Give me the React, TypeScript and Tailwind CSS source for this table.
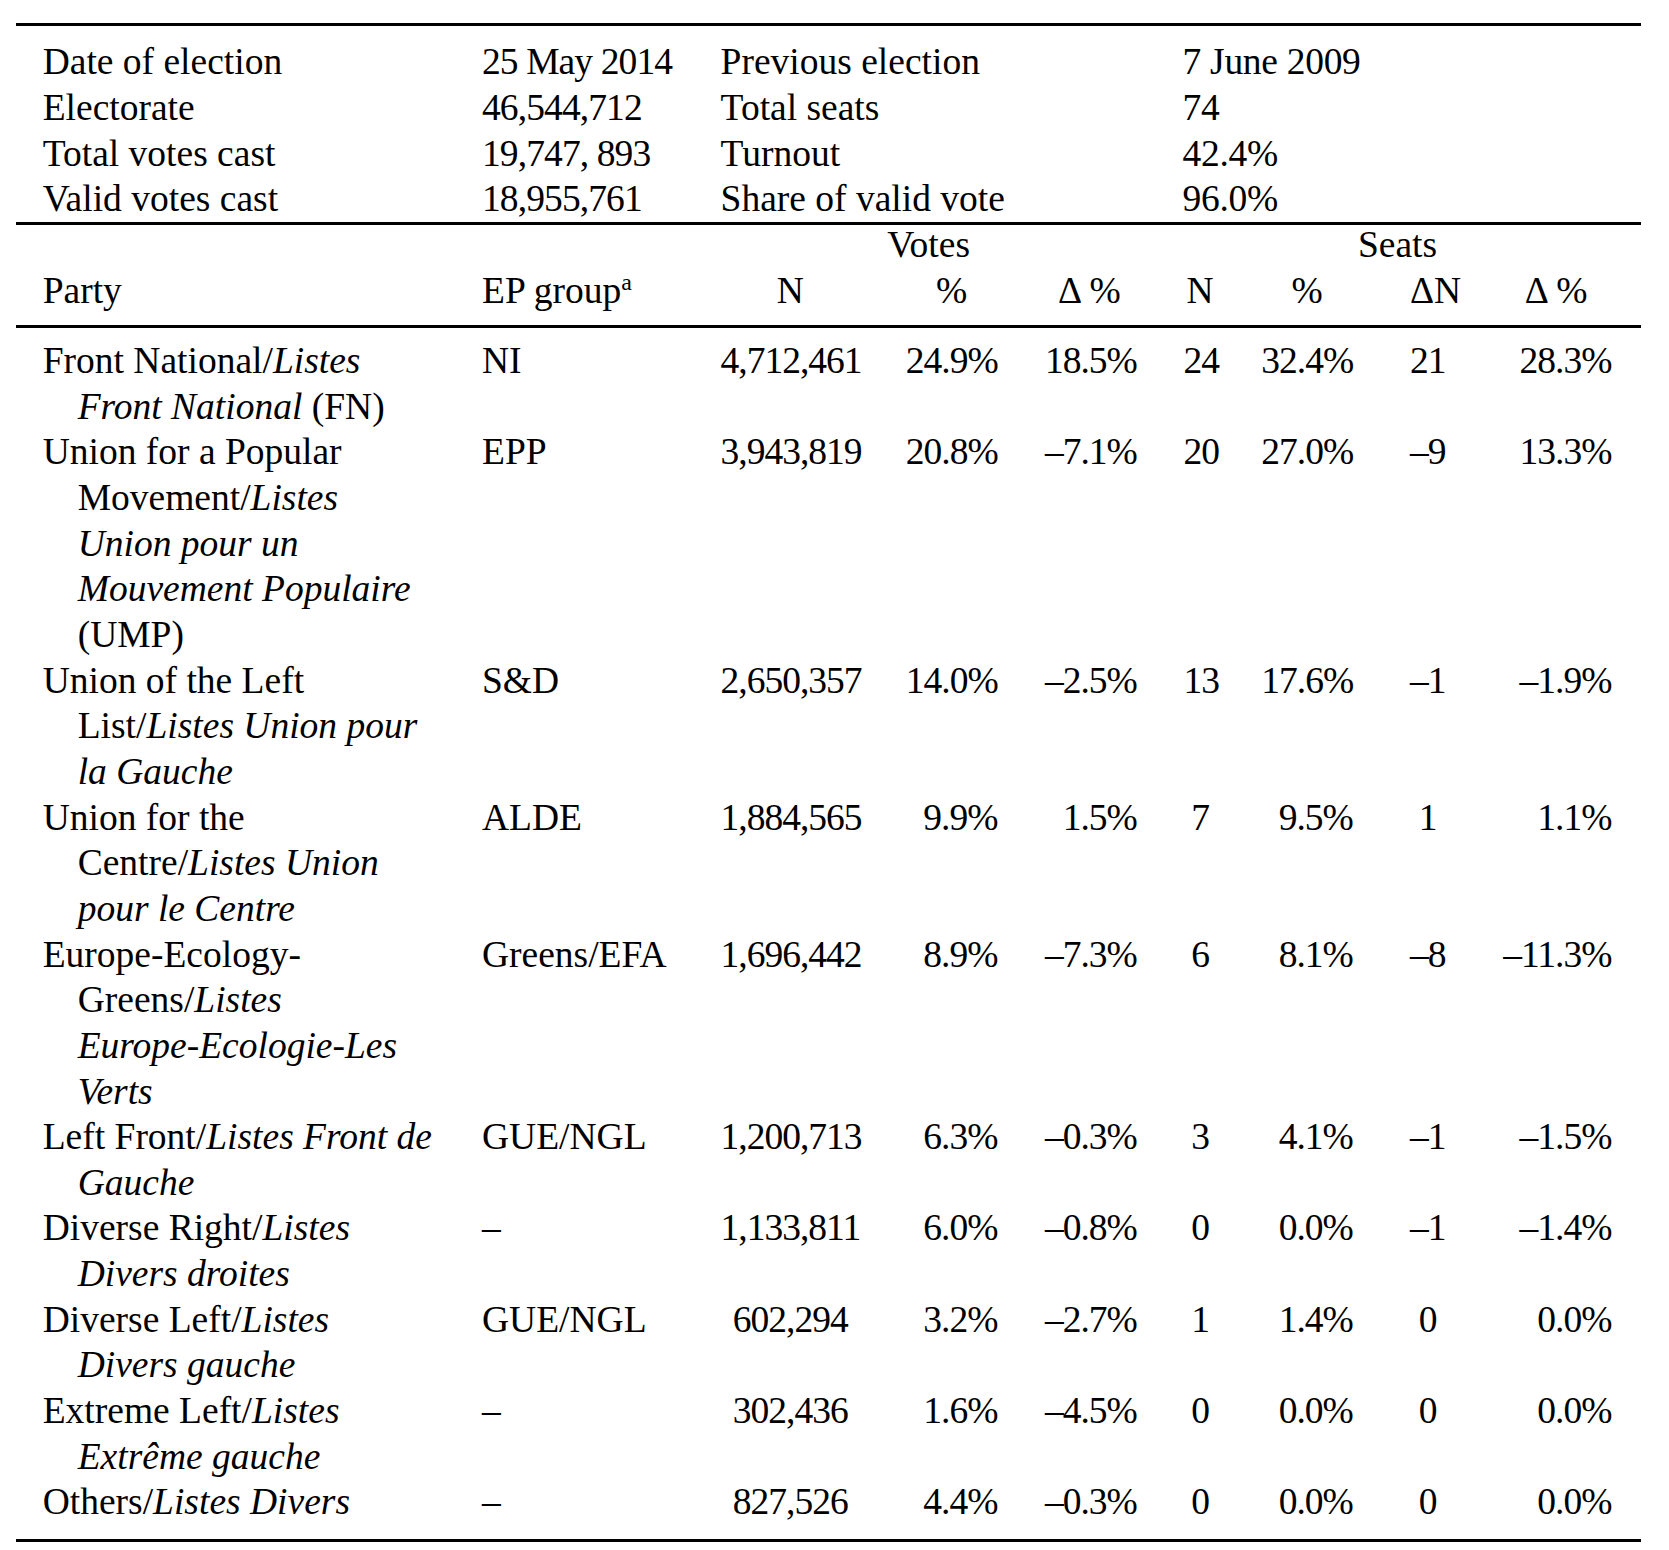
import type { ReactNode } from 'react'

// ---------------------------------------------------------------------------
// Types
// ---------------------------------------------------------------------------

type Seg = { t: string; i?: boolean }

type PartyRow = {
  lines: Seg[][]
  group: string
  values: string[]
}

// ---------------------------------------------------------------------------
// Data
// ---------------------------------------------------------------------------

const summary: [string, string, string, string][] = [
  ['Date of election', '25 May 2014', 'Previous election', '7 June 2009'],
  ['Electorate', '46,544,712', 'Total seats', '74'],
  ['Total votes cast', '19,747, 893', 'Turnout', '42.4%'],
  ['Valid votes cast', '18,955,761', 'Share of valid vote', '96.0%'],
]

const rows: PartyRow[] = [
  {
    lines: [[{ t: 'Front National/' }, { t: 'Listes', i: true }], [{ t: 'Front National', i: true }, { t: ' (FN)' }]],
    group: 'NI',
    values: ['4,712,461', '24.9%', '18.5%', '24', '32.4%', '21', '28.3%'],
  },
  {
    lines: [
      [{ t: 'Union for a Popular' }],
      [{ t: 'Movement/' }, { t: 'Listes', i: true }],
      [{ t: 'Union pour un', i: true }],
      [{ t: 'Mouvement Populaire', i: true }],
      [{ t: '(UMP)' }],
    ],
    group: 'EPP',
    values: ['3,943,819', '20.8%', '–7.1%', '20', '27.0%', '–9', '13.3%'],
  },
  {
    lines: [
      [{ t: 'Union of the Left' }],
      [{ t: 'List/' }, { t: 'Listes Union pour', i: true }],
      [{ t: 'la Gauche', i: true }],
    ],
    group: 'S&D',
    values: ['2,650,357', '14.0%', '–2.5%', '13', '17.6%', '–1', '–1.9%'],
  },
  {
    lines: [
      [{ t: 'Union for the' }],
      [{ t: 'Centre/' }, { t: 'Listes Union', i: true }],
      [{ t: 'pour le Centre', i: true }],
    ],
    group: 'ALDE',
    values: ['1,884,565', '9.9%', '1.5%', '7', '9.5%', '1', '1.1%'],
  },
  {
    lines: [
      [{ t: 'Europe-Ecology-' }],
      [{ t: 'Greens/' }, { t: 'Listes', i: true }],
      [{ t: 'Europe-Ecologie-Les', i: true }],
      [{ t: 'Verts', i: true }],
    ],
    group: 'Greens/EFA',
    values: ['1,696,442', '8.9%', '–7.3%', '6', '8.1%', '–8', '–11.3%'],
  },
  {
    lines: [[{ t: 'Left Front/' }, { t: 'Listes Front de', i: true }], [{ t: 'Gauche', i: true }]],
    group: 'GUE/NGL',
    values: ['1,200,713', '6.3%', '–0.3%', '3', '4.1%', '–1', '–1.5%'],
  },
  {
    lines: [[{ t: 'Diverse Right/' }, { t: 'Listes', i: true }], [{ t: 'Divers droites', i: true }]],
    group: '–',
    values: ['1,133,811', '6.0%', '–0.8%', '0', '0.0%', '–1', '–1.4%'],
  },
  {
    lines: [[{ t: 'Diverse Left/' }, { t: 'Listes', i: true }], [{ t: 'Divers gauche', i: true }]],
    group: 'GUE/NGL',
    values: ['602,294', '3.2%', '–2.7%', '1', '1.4%', '0', '0.0%'],
  },
  {
    lines: [[{ t: 'Extreme Left/' }, { t: 'Listes', i: true }], [{ t: 'Extrême gauche', i: true }]],
    group: '–',
    values: ['302,436', '1.6%', '–4.5%', '0', '0.0%', '0', '0.0%'],
  },
  {
    lines: [[{ t: 'Others/' }, { t: 'Listes Divers', i: true }]],
    group: '–',
    values: ['827,526', '4.4%', '–0.3%', '0', '0.0%', '0', '0.0%'],
  },
]

// column tracks shared by header and body (widths measured off the page)
const tableCols =
  'grid grid-cols-[466px_238.6px_139.4px_137.4px_139.4px_79.8px_136.3px_92.6px_166px]'

// data cells: numbers right-aligned, counts centred
const valueCls = [
  'text-center',
  'pl-[45.8px] text-right',
  'pl-[44.6px] text-right',
  'pl-[46.8px] text-center',
  'pl-[44.7px] text-right',
  'pl-[57.1px] text-center',
  'pl-[55.3px] text-right',
]

// header labels are centred over the data
const headCls = [
  'text-center',
  'pl-[45.8px] text-center',
  'pl-[44.6px] text-center',
  'pl-[46.8px] text-center',
  'pl-[44.7px] text-center',
  'pl-[57.1px] text-center',
  'pl-[55.3px] text-center',
]

// ---------------------------------------------------------------------------
// Pieces
// ---------------------------------------------------------------------------

function Line({ segs }: { segs: Seg[] }) {
  return (
    <div>
      {segs.map((s, k) => (s.i ? <i key={k}>{s.t}</i> : <span key={k}>{s.t}</span>))}
    </div>
  )
}

function PartyCell({ lines }: { lines: Seg[][] }) {
  return (
    <div className="pl-[26.7px]">
      {lines.map((segs, k) => (
        <div key={k} className={k === 0 ? '' : 'pl-[35px]'}>
          <Line segs={segs} />
        </div>
      ))}
    </div>
  )
}

function Cell({ className, children }: { className?: string; children: ReactNode }) {
  return <div className={`whitespace-nowrap ${className ?? ''}`}>{children}</div>
}

// ---------------------------------------------------------------------------
// App
// ---------------------------------------------------------------------------

export default function App() {
  return (
    <main className="min-h-[1550px] w-[1669px] bg-white pt-[23px] pl-[16px] font-['Liberation_Serif','Times_New_Roman',serif] text-[37.5px] leading-[45.65px] text-black">
      <div className="w-[1625px]">
        {/* election summary */}
        <section className="border-y-[3px] border-black pt-[13.4px] pb-0">
          <div className="grid grid-cols-[466px_238.6px_462px_1fr]">
            {summary.map((r) => (
              <div key={r[0]} className="contents">
                <Cell className="pl-[26.7px]">{r[0]}</Cell>
                <Cell className="tracking-[-0.9px]">{r[1]}</Cell>
                <Cell>{r[2]}</Cell>
                <Cell className="tracking-[-0.3px]">{r[3]}</Cell>
              </div>
            ))}
          </div>
        </section>

        {/* column headings */}
        <section className="border-b-[3px] border-black pb-[11.5px]">
          <div className={`${tableCols} -mt-[3px]`}>
            <Cell className="col-span-3 col-start-3 text-center">Votes</Cell>
            <Cell className="col-span-4 col-start-6 pl-[46.8px] text-center">Seats</Cell>

            <Cell className="pl-[26.7px]">Party</Cell>
            <Cell>
              EP group<sup className="relative -top-[13px] align-baseline text-[24px] leading-none">a</sup>
            </Cell>
            {['N', '%', 'Δ %', 'N', '%', 'ΔN', 'Δ %'].map((h, k) => (
              <Cell key={k} className={headCls[k]}>
                {h}
              </Cell>
            ))}
          </div>
        </section>

        {/* results */}
        <section className="border-b-[3px] border-black pt-[10.2px] pb-[14px]">
          <div className={`${tableCols} items-start`}>
            {rows.map((r, n) => (
              <div key={n} className="contents">
                <PartyCell lines={r.lines} />
                <Cell>{r.group}</Cell>
                {r.values.map((v, k) => (
                  <Cell key={k} className={`tracking-[-1px] ${valueCls[k]}`}>
                    {v}
                  </Cell>
                ))}
              </div>
            ))}
          </div>
        </section>
      </div>
    </main>
  )
}
